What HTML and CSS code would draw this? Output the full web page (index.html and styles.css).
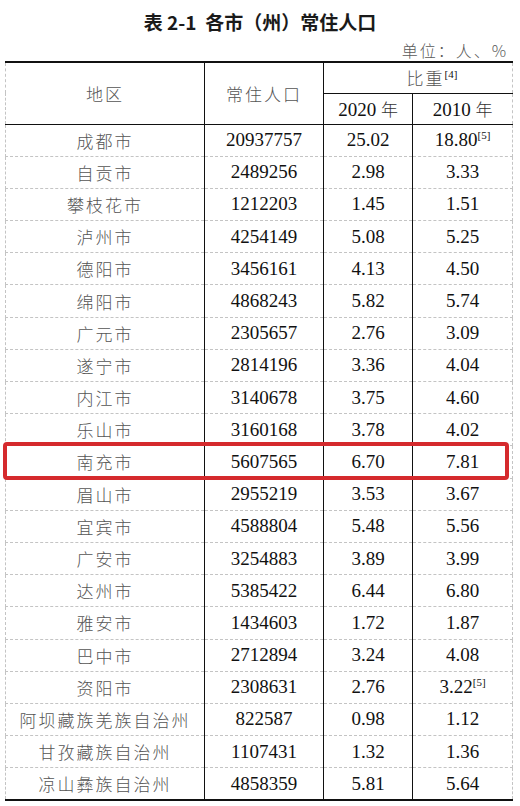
FILE: index.html
```html
<!DOCTYPE html>
<html lang="zh">
<head>
<meta charset="utf-8">
<link rel="stylesheet" href="styles.css">
</head>
<body>
<div class="page">
  <div class="title">表 2-1&nbsp; 各市（州）常住人口</div>
  <div class="unit">单位：人、%</div>
  <div class="table-wrap">
    <table class="pop">
      <colgroup>
        <col class="c1"><col class="c2"><col class="c3"><col class="c4">
      </colgroup>
      <thead>
        <tr class="h1">
          <th rowspan="2" class="zh">地区</th>
          <th rowspan="2" class="zh">常住人口</th>
          <th colspan="2" class="zh share">比重<sup>[4]</sup></th>
        </tr>
        <tr class="h2">
          <th class="yr">2020 <span class="nian">年</span></th>
          <th class="yr">2010 <span class="nian">年</span></th>
        </tr>
      </thead>
      <tbody>
        <tr><td class="zh">成都市</td><td>20937757</td><td>25.02</td><td>18.80<sup>[5]</sup></td></tr>
        <tr><td class="zh">自贡市</td><td>2489256</td><td>2.98</td><td>3.33</td></tr>
        <tr><td class="zh">攀枝花市</td><td>1212203</td><td>1.45</td><td>1.51</td></tr>
        <tr><td class="zh">泸州市</td><td>4254149</td><td>5.08</td><td>5.25</td></tr>
        <tr><td class="zh">德阳市</td><td>3456161</td><td>4.13</td><td>4.50</td></tr>
        <tr><td class="zh">绵阳市</td><td>4868243</td><td>5.82</td><td>5.74</td></tr>
        <tr><td class="zh">广元市</td><td>2305657</td><td>2.76</td><td>3.09</td></tr>
        <tr><td class="zh">遂宁市</td><td>2814196</td><td>3.36</td><td>4.04</td></tr>
        <tr><td class="zh">内江市</td><td>3140678</td><td>3.75</td><td>4.60</td></tr>
        <tr><td class="zh">乐山市</td><td>3160168</td><td>3.78</td><td>4.02</td></tr>
        <tr><td class="zh">南充市</td><td>5607565</td><td>6.70</td><td>7.81</td></tr>
        <tr><td class="zh">眉山市</td><td>2955219</td><td>3.53</td><td>3.67</td></tr>
        <tr><td class="zh">宜宾市</td><td>4588804</td><td>5.48</td><td>5.56</td></tr>
        <tr><td class="zh">广安市</td><td>3254883</td><td>3.89</td><td>3.99</td></tr>
        <tr><td class="zh">达州市</td><td>5385422</td><td>6.44</td><td>6.80</td></tr>
        <tr><td class="zh">雅安市</td><td>1434603</td><td>1.72</td><td>1.87</td></tr>
        <tr><td class="zh">巴中市</td><td>2712894</td><td>3.24</td><td>4.08</td></tr>
        <tr><td class="zh">资阳市</td><td>2308631</td><td>2.76</td><td>3.22<sup>[5]</sup></td></tr>
        <tr><td class="zh">阿坝藏族羌族自治州</td><td>822587</td><td>0.98</td><td>1.12</td></tr>
        <tr><td class="zh">甘孜藏族自治州</td><td>1107431</td><td>1.32</td><td>1.36</td></tr>
        <tr><td class="zh">凉山彝族自治州</td><td>4858359</td><td>5.81</td><td>5.64</td></tr>
      </tbody>
    </table>
    <div class="highlight"></div>
  </div>
</div>
</body>
</html>
```

FILE: styles.css
```css
html, body {
  margin: 0;
  padding: 0;
  background: #ffffff;
}

.page {
  width: 520px;
  height: 806px;
  overflow: hidden;
  font-family: "Liberation Serif", "Noto Sans CJK SC", serif;
}

.title {
  padding-top: 3px;
  height: 37px;
  line-height: 37px;
  text-align: center;
  font-family: "Noto Sans CJK SC", "Noto Sans", sans-serif;
  font-weight: 700;
  font-size: 19px;
  color: #1a1a1a;
}

.unit {
  height: 21px;
  line-height: 20px;
  text-align: right;
  padding-right: 12px;
  font-family: "Noto Sans CJK SC", sans-serif;
  font-weight: 300;
  font-size: 16px;
  letter-spacing: 2px;
  color: #5a5a5a;
}

.table-wrap {
  position: relative;
  margin-left: 5px;
  width: 507px;
}

.pop {
  width: 507px;
  border-collapse: collapse;
  table-layout: fixed;
  border-top: 2px solid #111;
  border-bottom: 2px solid #111;
}

.c1 { width: 199px; }
.c2 { width: 119px; }
.c3 { width: 89px; }
.c4 { width: 100px; }

.pop th,
.pop td {
  padding: 0;
  text-align: center;
  vertical-align: middle;
  font-weight: 400;
  font-size: 19px;
  color: #111;
  border-left: 1px solid #111;
  border-right: 1px solid #111;
  border-top: 1px dashed #c4c4c4;
  border-bottom: 1px dashed #c4c4c4;
  white-space: nowrap;
}

.pop tr > :first-child {
  border-left: 1px dashed #c4c4c4;
}

.pop tr > :last-child {
  border-right: 1px dashed #c4c4c4;
}

.pop .h1 th:nth-child(2) {
  border-left: 1px solid #111;
}

.pop .h1 th.share {
  border-right: 1px dashed #c4c4c4;
  border-bottom: 1px solid #111;
  padding-left: 28px;
}

.pop thead tr:last-child th,
.pop thead th[rowspan] {
  border-bottom: 1px solid #111;
}

.pop .h2 th:last-child {
  border-right: 1px dashed #c4c4c4;
}

.pop .h1 { height: 31px; }
.pop .h2 { height: 31px; }
.pop tbody tr { height: 32.19px; }

.pop .zh {
  font-family: "Noto Sans CJK SC", sans-serif;
  font-weight: 300;
  font-size: 17px;
  letter-spacing: 2px;
  color: #555;
}

.pop th.yr {
  font-size: 19px;
  font-weight: 400;
}

.nian {
  font-family: "Noto Sans CJK SC", sans-serif;
  font-weight: 300;
  font-size: 17px;
  color: #333;
}

sup {
  font-family: "Liberation Serif", serif;
  font-size: 11px;
  line-height: 0;
  vertical-align: 7px;
  letter-spacing: 0;
  color: #111;
}

.highlight {
  position: absolute;
  left: -2px;
  top: 381px;
  width: 498px;
  height: 30px;
  border: 4px solid #d52a2d;
  border-radius: 4px;
  pointer-events: none;
}
```
